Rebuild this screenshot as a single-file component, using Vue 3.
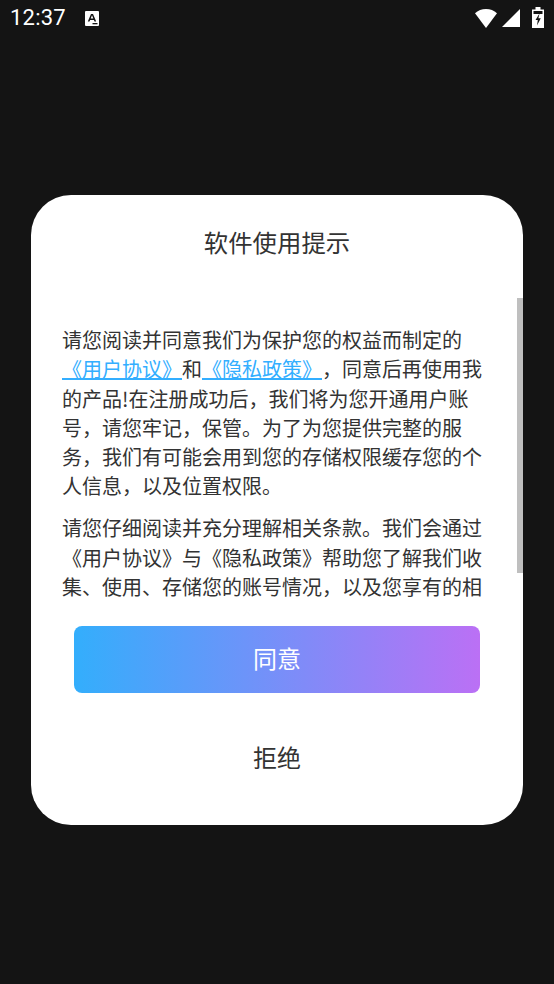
<script setup>
</script>

<template>
  <div class="page">
    <header class="status">
      <span class="time">12:37</span>
      <svg class="a-icon" viewBox="0 0 14 15" width="14" height="15">
        <rect width="14" height="15" rx="1" fill="#fff" />
        <path d="M2.800 10.600 6 3h2l3.200 7.600H9.500L8.900 9H5.100l-.6 1.600zM5.700 7.500h2.600L7 4.300z" fill="#141414" />
        <rect x="7.500" y="12" width="5" height="1.300" fill="#141414" />
      </svg>
      <span class="spacer"></span>
      <svg class="wifi" viewBox="0 0 24 20" width="24" height="20">
        <path d="M1 5.200C4 2.600 7.800 1 12 1s8 1.600 11 4.200L12 20z" fill="#fff" />
      </svg>
      <svg class="signal" viewBox="0 0 18 18" width="18" height="18">
        <path d="M0 18 18 0v18z" fill="#fff" />
      </svg>
      <svg class="battery" viewBox="0 0 12 21" width="12" height="21">
        <path fill-rule="evenodd" d="M3.500 0h5v2.500H12V21H0V2.500h3.500zM1.500 4v3h9V4z" fill="#fff" />
        <path d="M7.500 6.500 3.500 13h2.300L5 18.500l3.800-7.300H6.400z" fill="#141414" />
      </svg>
    </header>

    <main class="card">
      <h1 class="title">软件使用提示</h1>
      <div class="scroll">
        <div class="clip">
          <p>请您阅读并同意我们为保护您的权益而制定的<a>《用户协议》</a>和<a>《隐私政策》</a>&#xFF0C;同意后再使用我的产品!在注册成功后&#xFF0C;我们将为您开通用户账号&#xFF0C;请您牢记&#xFF0C;保管。为了为您提供完整的服务&#xFF0C;我们有可能会用到您的存储权限缓存您的个人信息&#xFF0C;以及位置权限。</p>
          <p>请您仔细阅读并充分理解相关条款。我们会通过《用户协议》与《隐私政策》帮助您了解我们收集、使用、存储您的账号情况&#xFF0C;以及您享有的相</p>
        </div>
        <i class="thumb"></i>
      </div>
      <button class="agree">同意</button>
      <button class="reject">拒绝</button>
    </main>
  </div>
</template>

<style scoped>
.page {
  width: 554px;
  height: 984px;
  background: #141414;
  display: flex;
  flex-direction: column;
  overflow: hidden;
  font-family: "Noto Sans CJK SC", "Noto Sans", sans-serif;
}
.status {
  height: 36px;
  margin-bottom: 159px;
  display: flex;
  align-items: center;
  padding: 0 10px 0 10px;
  color: #fff;
}
.time {
  font-family: Roboto, sans-serif;
  font-size: 22px;
  letter-spacing: 0.2px;
  line-height: 36px;
}
.a-icon { margin-left: 19px; }
.spacer { flex: 1; }
.wifi { margin-right: 4px; margin-top: -1px; }
.signal { margin-right: 12px; }
.battery { margin-top: -1px; }
.card {
  width: 492px;
  height: 630px;
  margin-left: 31px;
  background: #fff;
  border-radius: 40px;
  display: flex;
  flex-direction: column;
  align-items: center;
  overflow: hidden;
}
.title {
  margin: 30px 0 0;
  font-size: 24.400px;
  font-weight: 400;
  line-height: 34px;
  color: #333;
}
.scroll {
  position: relative;
  align-self: stretch;
  height: 306px;
  margin-top: 39px;
}
.clip {
  height: 100%;
  overflow: hidden;
  padding: 27px 41px 0 31px;
  box-sizing: border-box;
}
.clip p {
  margin: 0 0 12.600px;
  font-size: 20px;
  line-height: 29.300px;
  color: #333;
  font-kerning: none;
  text-spacing-trim: space-all;
  font-feature-settings: "halt" 0, "chws" 0, "palt" 0;
}
.clip a {
  color: #33aeff;
  text-decoration: underline;
}
.thumb {
  position: absolute;
  top: 0;
  right: 0;
  width: 6px;
  height: 275px;
  background: #bfbfbf;
}
button {
  border: 0;
  padding: 0 0 4px;
  font-family: inherit;
  font-size: 24px;
  cursor: pointer;
}
.agree {
  width: 406px;
  height: 67px;
  margin-top: 22px;
  color: #fff;
  border-radius: 8px;
  background: linear-gradient(90deg, #33aefc, #bb70f5);
  flex: none;
}
.reject {
  width: 406px;
  height: 67px;
  margin-top: 31px;
  padding-bottom: 2px;
  color: #333;
  background: #fff;
  flex: none;
}
</style>
